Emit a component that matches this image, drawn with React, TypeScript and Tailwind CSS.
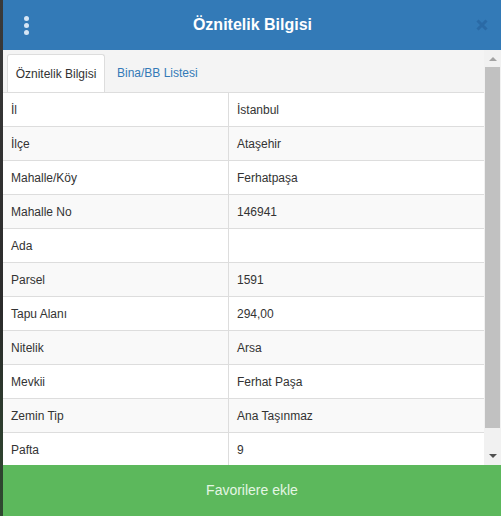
import React from "react";

const rows: [string, string][] = [
  ["İl", "İstanbul"],
  ["İlçe", "Ataşehir"],
  ["Mahalle/Köy", "Ferhatpaşa"],
  ["Mahalle No", "146941"],
  ["Ada", ""],
  ["Parsel", "1591"],
  ["Tapu Alanı", "294,00"],
  ["Nitelik", "Arsa"],
  ["Mevkii", "Ferhat Paşa"],
  ["Zemin Tip", "Ana Taşınmaz"],
  ["Pafta", "9"],
];

function Kebab() {
  return (
    <div className="flex flex-col items-center gap-[2px]">
      <span className="block h-[5px] w-[5px] rounded-full bg-[#d6e6f5]" />
      <span className="block h-[5px] w-[5px] rounded-full bg-[#d6e6f5]" />
      <span className="block h-[5px] w-[5px] rounded-full bg-[#d6e6f5]" />
    </div>
  );
}

function CloseIcon() {
  return (
    <svg width="12" height="12" viewBox="0 0 12 12">
      <path d="M1.5 1.5 L10.5 10.5 M10.5 1.5 L1.5 10.5" stroke="#2a6aa6" strokeWidth="3" strokeLinecap="butt" />
    </svg>
  );
}

function Scrollbar() {
  return (
    <div className="flex w-[17px] flex-col items-center bg-[#f1f1f1]">
      <div className="flex h-[17px] w-full items-center justify-center">
        <svg width="8" height="5" viewBox="0 0 8 5">
          <path d="M0 5 L4 1 L8 5 Z" fill="#a3a3a3" />
        </svg>
      </div>
      <div className="mx-auto mb-[20px] w-[15px] flex-1 bg-[#c1c1c1]" />
      <div className="flex h-[17px] w-full items-center justify-center">
        <svg width="8" height="5" viewBox="0 0 8 5">
          <path d="M0 0 L4 4 L8 0 Z" fill="#505050" />
        </svg>
      </div>
    </div>
  );
}

export default function App() {
  return (
    <div
      className="flex h-[516px] w-[501px] overflow-hidden bg-[#2e2e2e]"
      style={{ fontFamily: '"Liberation Sans", Arial, sans-serif' }}
    >
      <div className="w-[3px] shrink-0 bg-[linear-gradient(#3a3a3a,#2b2b2b_60%,#2f4a30)]" />
      <div className="flex flex-1 flex-col bg-white">
        <header className="flex h-[50px] shrink-0 items-center bg-[#337ab7] pr-[13px] pl-[21px]">
          <Kebab />
          <h1 className="flex-1 text-center text-[16px] font-bold text-white">Öznitelik Bilgisi</h1>
          <CloseIcon />
        </header>

        <div className="flex min-h-0 flex-1">
          <div className="flex min-w-0 flex-1 flex-col overflow-hidden bg-[#f4f4f4]">
            <div className="flex pt-[4px] pl-[4px]">
              <div className="relative z-10 -mb-px flex h-[38px] w-[98px] items-center justify-center rounded-t-[3px] border border-b-0 border-[#dddddd] bg-white text-[12px] text-[#333]">
                Öznitelik Bilgisi
              </div>
              <div className="flex h-[38px] items-center px-[12px] text-[12px] text-[#337ab7]">Bina/BB Listesi</div>
            </div>
            <div className="border-t border-[#dddddd] bg-white">
              {rows.map(([k, v], i) => (
                <div
                  key={k}
                  className={`flex h-[34px] border-b border-[#dddddd] text-[12px] text-[#333] ${
                    i % 2 === 0 ? "bg-white" : "bg-[#f9f9f9]"
                  }`}
                >
                  <div className="flex w-[226px] shrink-0 items-center border-r border-[#dddddd] pl-[8px]">{k}</div>
                  <div className="flex flex-1 items-center pl-[8px]">{v}</div>
                </div>
              ))}
            </div>
          </div>
          <Scrollbar />
        </div>

        <button className="h-[51px] shrink-0 bg-[#5cb85c] text-[14px] text-[#e4f6e4]">Favorilere ekle</button>
      </div>
    </div>
  );
}
